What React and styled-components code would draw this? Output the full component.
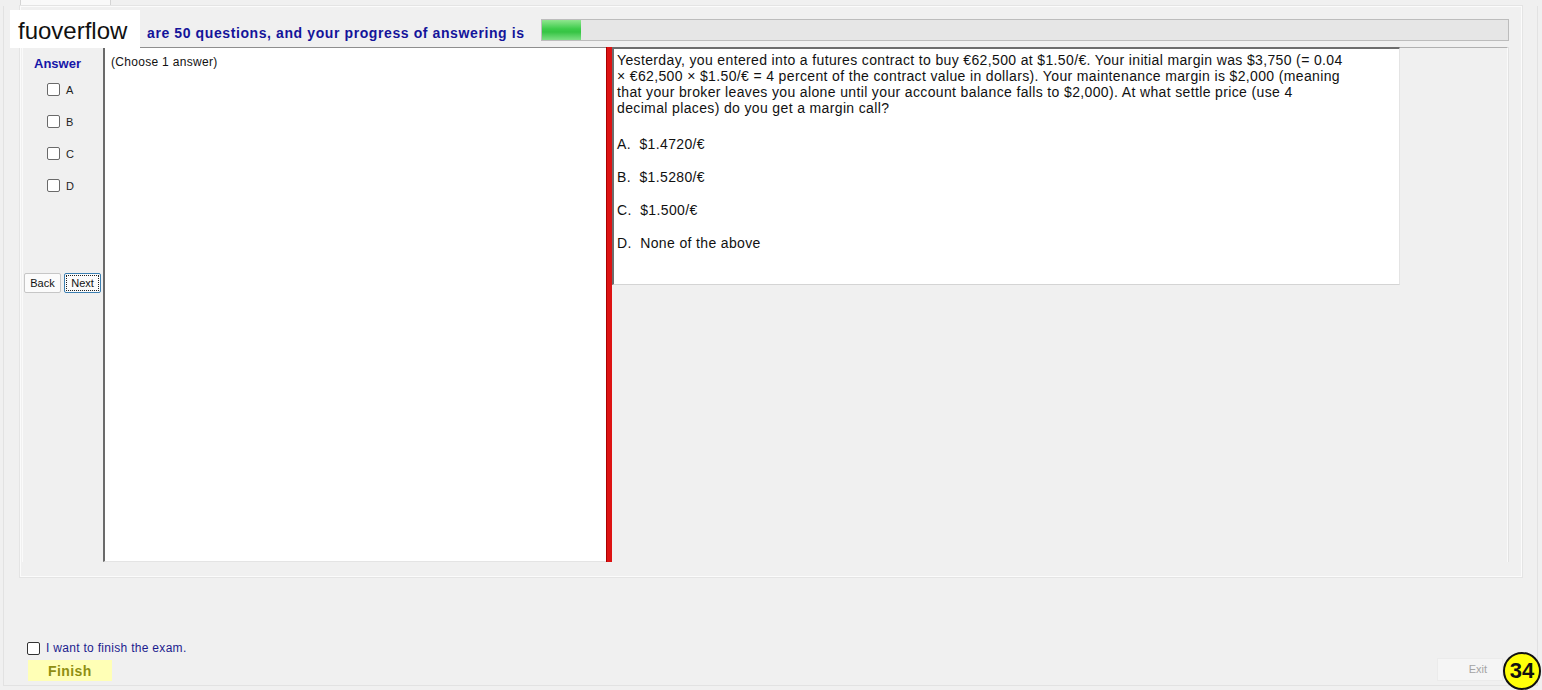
import React from "react";
import styled, { createGlobalStyle } from "styled-components";

const GlobalStyle = createGlobalStyle`
  body {
    margin: 0;
    background: #f0f0f0;
    font-family: "Liberation Sans", Arial, sans-serif;
  }
`;

const Page = styled.div`
  position: relative;
  width: 1542px;
  height: 690px;
  overflow: hidden;
  background: #f0f0f0;
`;

const TabStrip = styled.div`
  height: 6px;
  padding-left: 20px;
  display: flex;
`;

const Tab = styled.div`
  width: 89px;
  height: 6px;
  background: #f9f9f9;
  border: 1px solid #d4d4d4;
  border-top: none;
  border-bottom: none;
`;

const Frame = styled.div`
  margin: 0 4px 0 3px;
  height: 679px;
  border: 1px solid #e2e2e2;
  border-top: none;
  padding: 0 15px 0 16px;
  display: flex;
  flex-direction: column;
`;

const Panel = styled.div`
  height: 569px;
  border: 1px solid #fbfbfb;
  box-shadow: 0 0 0 1px #e4e4e4;
  display: flex;
  flex-direction: column;
`;

const Header = styled.div`
  display: grid;
  grid-template-columns: 394px 968px;
  align-items: center;
  height: 22px;
  padding: 11px 0 0 126px;
  margin-bottom: 7px;
`;

const HeaderText = styled.span`
  font-size: 14px;
  font-weight: bold;
  letter-spacing: 0.6px;
  color: #14149a;
  margin-top: 7px;
`;

const Progress = styled.div`
  height: 20px;
  background: #e6e6e6;
  border: 1px solid #bcbcbc;
  display: flex;
`;

const ProgressFill = styled.div`
  height: 100%;
  background: linear-gradient(to bottom, #8fe68f 0%, #3ccc4a 45%, #36c444 60%, #7ddf84 100%);
`;

const Content = styled.div`
  display: flex;
  height: 515px;
  margin-left: 1px;
  width: 1486px;
`;

const Sidebar = styled.div`
  width: 80px;
  border-left: 1px solid #fafafa;
  display: flex;
  flex-direction: column;
`;

const AnswerTitle = styled.div`
  font-size: 13px;
  font-weight: bold;
  color: #1616a8;
  margin: 9px 0 0 11px;
  height: 16px;
`;

const ChoiceList = styled.div`
  display: flex;
  flex-direction: column;
  gap: 19px;
  margin: 11px 0 0 24px;
`;

const Choice = styled.label`
  display: flex;
  align-items: center;
  gap: 6px;
  font-size: 11px;
  color: #222;
  height: 13px;
`;

const Box = styled.span`
  width: 11px;
  height: 11px;
  border: 1px solid ${(p) => p.$dark || "#6a6a6a"};
  border-radius: 2px;
  background: #fff;
  display: inline-block;
`;

const NavRow = styled.div`
  display: flex;
  gap: 3px;
  margin: 81px 0 0 1px;
`;

const NavButton = styled.button`
  width: ${(p) => p.$w}px;
  height: 20px;
  padding: 0;
  font-family: "Liberation Sans", Arial, sans-serif;
  font-size: 11px;
  color: #111;
  background: #fbfbfb;
  border: 1px solid ${(p) => (p.$focus ? "#3c7fb1" : "#c6c6c6")};
  border-radius: 2px;
  outline: ${(p) => (p.$focus ? "1px dotted #222" : "none")};
  outline-offset: -3px;
`;

const AnswerPane = styled.div`
  width: 495px;
  background: #fff;
  border-left: 2px solid #6a6a6a;
  border-top: 1px solid #8e8e8e;
  border-bottom: 1px solid #e4e4e4;
  padding: 7px 0 0 6px;
  font-size: 12px;
  letter-spacing: 0.3px;
  color: #111;
`;

const Splitter = styled.div`
  width: 5px;
  background: #dd1313;
  border-left: 1px solid #a00;
`;

const RightArea = styled.div`
  flex: 1;
  display: flex;
  align-items: flex-start;
  border-top: 1px solid #b0b0b0;
  border-right: 1px solid #fafafa;
  box-shadow: 1px 0 0 #e2e2e2;
`;

const QuestionBox = styled.div`
  width: 782px;
  height: 232px;
  margin-top: -1px;
  background: #fff;
  border-left: 2px solid #6d6d6d;
  border-top: 2px solid #6d6d6d;
  border-bottom: 1px solid #d4d4d4;
  border-right: 1px solid #e4e4e4;
  padding: 3px 0 0 3px;
  font-size: 14px;
  line-height: 16px;
  letter-spacing: 0.36px;
  color: #111;
`;

const Option = styled.div`
  margin-top: ${(p) => (p.$first ? 20 : 17)}px;
`;

const Footer = styled.div`
  flex: 1;
  display: flex;
  justify-content: space-between;
  align-items: flex-end;
  padding-bottom: 4px;
`;

const FinishGroup = styled.div`
  display: flex;
  flex-direction: column;
  gap: 5px;
`;

const FinishCheck = styled.label`
  display: flex;
  align-items: center;
  gap: 6px;
  margin-left: 7px;
  font-size: 12px;
  letter-spacing: 0.3px;
  color: #1c1c8e;
`;

const FinishButton = styled.div`
  width: 64px;
  height: 21px;
  margin-left: 8px;
  padding-left: 20px;
  background: #ffffb6;
  color: #8f8f12;
  font-size: 14px;
  font-weight: bold;
  letter-spacing: 0.4px;
  line-height: 22px;
`;

const ExitButton = styled.div`
  width: 64px;
  height: 21px;
  margin-right: 19px;
  background: #f5f5f5;
  border: 1px solid #ebebeb;
  color: #a4a4a4;
  font-size: 11px;
  line-height: 21px;
  text-align: right;
  & span {
    margin-right: 15px;
  }
`;

const Watermark = styled.div`
  position: absolute;
  left: 10px;
  top: 10px;
  width: 122px;
  height: 38px;
  padding-left: 8px;
  background: #fff;
  font-size: 24px;
  line-height: 42px;
  color: #111;
`;

const Badge = styled.div`
  position: absolute;
  left: 1503px;
  top: 652px;
  width: 34px;
  height: 34px;
  border: 2px solid #111;
  border-radius: 50%;
  background: #ffff0a;
  display: flex;
  align-items: center;
  justify-content: center;
  font-size: 22px;
  font-weight: bold;
  color: #111;
`;

const choices = ["A", "B", "C", "D"];

const options = [
  "A.\u00a0 $1.4720/€",
  "B.\u00a0 $1.5280/€",
  "C.\u00a0 $1.500/€",
  "D.\u00a0 None of the above",
];

export default function App() {
  return (
    <Page>
      <GlobalStyle />
      <TabStrip>
        <Tab />
      </TabStrip>
      <Frame>
        <Panel>
          <Header>
            <HeaderText>are 50 questions, and your progress of answering is</HeaderText>
            <Progress>
              <ProgressFill style={{ width: `${(1 / 25) * 100}%` }} />
            </Progress>
          </Header>
          <Content>
            <Sidebar>
              <AnswerTitle>Answer</AnswerTitle>
              <ChoiceList>
                {choices.map((c) => (
                  <Choice key={c}>
                    <Box />
                    {c}
                  </Choice>
                ))}
              </ChoiceList>
              <NavRow>
                <NavButton $w={37}>Back</NavButton>
                <NavButton $w={37} $focus>
                  Next
                </NavButton>
              </NavRow>
            </Sidebar>
            <AnswerPane>(Choose 1 answer)</AnswerPane>
            <Splitter />
            <RightArea>
              <QuestionBox>
                <div>
                  Yesterday, you entered into a futures contract to buy €62,500 at $1.50/€. Your initial margin was $3,750 (= 0.04
                  <br />
                  × €62,500 × $1.50/€ = 4 percent of the contract value in dollars). Your maintenance margin is $2,000 (meaning
                  <br />
                  that your broker leaves you alone until your account balance falls to $2,000). At what settle price (use 4
                  <br />
                  decimal places) do you get a margin call?
                </div>
                {options.map((o, i) => (
                  <Option key={o} $first={i === 0}>
                    {o}
                  </Option>
                ))}
              </QuestionBox>
            </RightArea>
          </Content>
        </Panel>
        <Footer>
          <FinishGroup>
            <FinishCheck>
              <Box $dark="#333" />I want to finish the exam.
            </FinishCheck>
            <FinishButton>Finish</FinishButton>
          </FinishGroup>
          <ExitButton>
            <span>Exit</span>
          </ExitButton>
        </Footer>
      </Frame>
      <Watermark>fuoverflow</Watermark>
      <Badge>34</Badge>
    </Page>
  );
}
